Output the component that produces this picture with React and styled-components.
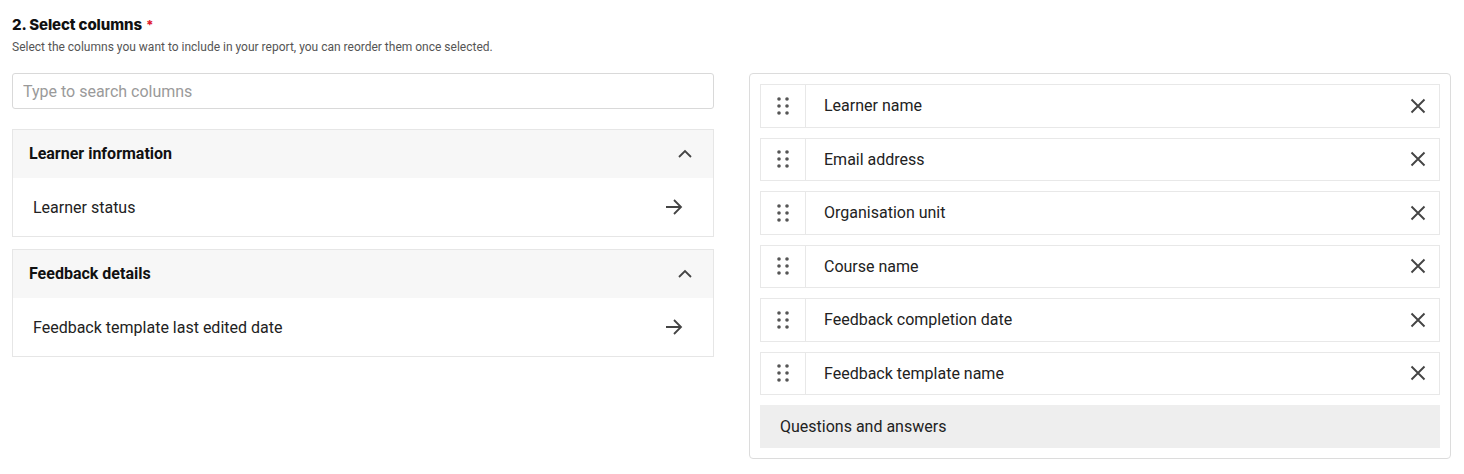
import React from 'react';
import styled, { createGlobalStyle } from 'styled-components';

const GlobalStyle = createGlobalStyle`
    body {
        margin: 0;
        background: #fff;
        font-family: Roboto, "Liberation Sans", sans-serif;
        color: #222;
    }
`;

const Page = styled.section`
    padding: 14px 13px 0 12px;
`;

const Title = styled.h2`
    margin: 0;
    font-family: Inter, "Liberation Sans", sans-serif;
    font-size: 15px;
    font-weight: 800;
    line-height: 22px;
    color: #111;
    letter-spacing: -0.1px;
`;

const Required = styled.span`
    color: #e0182d;
    margin-left: 4px;
    font-size: 13px;
    vertical-align: top;
`;

const Hint = styled.p`
    margin: 3px 0 0;
    font-size: 12px;
    line-height: 16px;
    color: #555;
`;

const Columns = styled.div`
    display: grid;
    grid-template-columns: 1fr 1fr;
    gap: 35px;
    margin-top: 18px;
    align-items: start;
`;

const LeftCol = styled.div`
    display: flex;
    flex-direction: column;
`;

const Search = styled.input`
    box-sizing: border-box;
    height: 36px;
    width: 100%;
    border: 1px solid #d9d9d9;
    border-radius: 3px;
    padding: 0 10px;
    font-family: Roboto, "Liberation Sans", sans-serif;
    font-size: 16px;
    color: #222;
    margin-bottom: 20px;
    &::placeholder {
        color: #9a9a9a;
    }
`;

const Group = styled.div`
    border: 1px solid #e6e6e6;
    margin-bottom: 12px;
`;

const GroupHead = styled.div`
    display: flex;
    align-items: center;
    justify-content: space-between;
    height: 48px;
    padding: 0 20px 0 16px;
    background: #f7f7f7;
    font-size: 16px;
    font-weight: 700;
    color: #111;
    line-height: 46px;
`;

const GroupItem = styled.div`
    display: flex;
    align-items: center;
    justify-content: space-between;
    height: 58px;
    padding: 0 30px 0 20px;
    font-size: 16px;
    color: #222;
`;

const Panel = styled.div`
    border: 1px solid #dcdcdc;
    border-radius: 4px;
    padding: 10px;
    display: flex;
    flex-direction: column;
    gap: 10px;
`;

const Row = styled.div`
    display: flex;
    align-items: center;
    height: 41.5px;
    border: 1px solid #e8e8e8;
`;

const Handle = styled.div`
    width: 44px;
    height: 100%;
    display: flex;
    align-items: center;
    justify-content: center;
    border-right: 1px solid #e8e8e8;
`;

const RowLabel = styled.span`
    flex: 1;
    padding-left: 18px;
    font-size: 16px;
    color: #222;
`;

const Remove = styled.button`
    border: 0;
    background: none;
    padding: 0;
    margin-right: 11px;
    width: 20px;
    height: 20px;
    display: flex;
    align-items: center;
    justify-content: center;
    cursor: pointer;
`;

const Section = styled.div`
    display: flex;
    align-items: center;
    height: 43px;
    padding: 0 20px;
    background: #eeeeee;
    font-size: 16px;
    color: #222;
`;

const Chevron = () => (
    <svg width="16" height="10" viewBox="0 0 16 10">
        <path d="M2 8 L8 2 L14 8" fill="none" stroke="#444" strokeWidth="1.8" />
    </svg>
);

const Arrow = () => (
    <svg width="18" height="16" viewBox="0 0 18 16">
        <path d="M1 8 H16 M9 1 L16 8 L9 15" fill="none" stroke="#444" strokeWidth="1.8" />
    </svg>
);

const Dots = () => (
    <svg width="12" height="18" viewBox="0 0 12 18">
        {[2, 10].map((x) =>
            [2, 9, 16].map((y) => <circle key={x + '-' + y} cx={x} cy={y} r="1.8" fill="#555" />)
        )}
    </svg>
);

const Cross = () => (
    <svg width="16" height="16" viewBox="0 0 16 16">
        <path d="M1.5 1.5 L14.5 14.5 M14.5 1.5 L1.5 14.5" fill="none" stroke="#444" strokeWidth="1.9" />
    </svg>
);

const groups = [
    { title: 'Learner information', items: ['Learner status'] },
    { title: 'Feedback details', items: ['Feedback template last edited date'] },
];

const selected = [
    'Learner name',
    'Email address',
    'Organisation unit',
    'Course name',
    'Feedback completion date',
    'Feedback template name',
];

export default function App() {
    return (
        <Page>
            <GlobalStyle />
            <Title>
                2. Select columns<Required>*</Required>
            </Title>
            <Hint>
                Select the columns you want to include in your report, you can reorder them once selected.
            </Hint>
            <Columns>
                <LeftCol>
                    <Search placeholder="Type to search columns" />
                    {groups.map((g) => (
                        <Group key={g.title}>
                            <GroupHead>
                                {g.title}
                                <Chevron />
                            </GroupHead>
                            {g.items.map((it) => (
                                <GroupItem key={it}>
                                    {it}
                                    <Arrow />
                                </GroupItem>
                            ))}
                        </Group>
                    ))}
                </LeftCol>
                <Panel>
                    {selected.map((s) => (
                        <Row key={s}>
                            <Handle>
                                <Dots />
                            </Handle>
                            <RowLabel>{s}</RowLabel>
                            <Remove aria-label="Remove">
                                <Cross />
                            </Remove>
                        </Row>
                    ))}
                    <Section>Questions and answers</Section>
                </Panel>
            </Columns>
        </Page>
    );
}
